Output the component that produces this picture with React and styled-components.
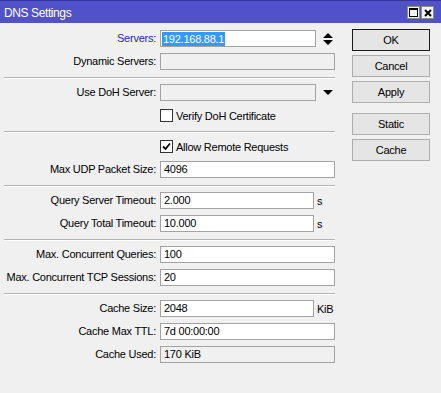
import React from 'react'
import styled, { createGlobalStyle } from 'styled-components'

const GlobalStyle = createGlobalStyle`
  html, body, #root {
    margin: 0;
    height: 100%;
  }
  body {
    background: #f0f0f0;
    font-family: "Liberation Sans", Arial, sans-serif;
    font-size: 11px;
    letter-spacing: -0.25px;
    color: #000;
  }
`

const Window = styled.div`
  width: 441px;
  height: 393px;
  display: flex;
  flex-direction: column;
  background: #f0f0f0;
  overflow: hidden;
`

const TitleBar = styled.div`
  height: 23px;
  box-sizing: border-box;
  background: #5151c9;
  border-top: 1px solid #3434a0;
  display: flex;
  align-items: center;
  padding: 1px 7px 0 4px;
  color: #fff;
`

const Title = styled.div`
  flex: 1;
  font-size: 12px;
  letter-spacing: -0.4px;
`

const TitleButton = styled.div`
  width: 13px;
  height: 13px;
  box-sizing: border-box;
  background: #f2f2f2;
  border: 1px solid #8c8c8c;
  display: flex;
  align-items: center;
  justify-content: center;
  margin-left: 1px;
`

const Body = styled.div`
  display: flex;
  padding-top: 6px;
`

const Form = styled.div`
  width: 335px;
  padding-top: 1px;
`

const Group = styled.div`
  display: flex;
  flex-direction: column;
  gap: 6px;
`

const Separator = styled.div`
  height: 0;
  border-top: 1px solid #b4b4b4;
  border-bottom: 1px solid #ffffff;
  margin: 7px 0 5px 4px;
`

const Row = styled.div`
  display: grid;
  grid-template-columns: 156px 175px;
  column-gap: 4px;
  height: 17px;
  align-items: center;
`

const Label = styled.div`
  text-align: right;
  white-space: nowrap;
  line-height: 17px;
  color: ${p => (p.$active ? '#1f1fd0' : '#000')};
`

const Field = styled.div`
  display: flex;
  align-items: center;
  height: 17px;
`

const Input = styled.div`
  box-sizing: border-box;
  height: 17px;
  width: ${p => p.$width || 175}px;
  border: 1px solid #a3a3a3;
  background: ${p => (p.$disabled ? '#f0f0f0' : '#fff')};
  padding: 0 3px;
  line-height: 15px;
  white-space: nowrap;
  overflow: hidden;
`

const Selected = styled.span`
  display: inline-block;
  background: #3399ff;
  color: #fff;
  line-height: 14px;
  padding: 0 1px;
  margin-left: -2px;
  vertical-align: top;
  margin-top: 1px;
`

const Unit = styled.span`
  margin-left: 3px;
`

const IconSlot = styled.div`
  margin-left: 7px;
  display: flex;
  align-items: center;
`

const CheckField = styled.div`
  display: flex;
  align-items: center;
  gap: 3px;
  white-space: nowrap;
`

const CheckBox = styled.div`
  width: 13px;
  height: 13px;
  box-sizing: border-box;
  border: 1px solid #333;
  background: #fff;
  display: flex;
  align-items: center;
  justify-content: center;
`

const Buttons = styled.div`
  margin-left: 17px;
  width: 78px;
  display: flex;
  flex-direction: column;
  gap: 4px;
`

const Button = styled.button`
  height: 22px;
  box-sizing: border-box;
  margin: 0;
  margin-top: ${p => (p.$spaced ? '6px' : '0')};
  padding: 0;
  border: 1px solid ${p => (p.$default ? '#1b1b1b' : '#adadad')};
  background: #e5e5e5;
  font: inherit;
  font-size: 11px;
  letter-spacing: -0.25px;
  color: #000;
`

const UpDown = () => (
  <svg width="10" height="12" viewBox="0 0 10 12">
    <path d="M5 0 L10 5 H0 Z M0 7 H10 L5 12 Z" fill="#000" />
  </svg>
)

const DropArrow = () => (
  <svg width="10" height="5" viewBox="0 0 10 5">
    <path d="M0 0 H10 L5 5 Z" fill="#000" />
  </svg>
)

const Check = () => (
  <svg width="9" height="9" viewBox="0 0 9 9">
    <path d="M1 4.5 L3.5 7 L8 1.5" stroke="#000" strokeWidth="1.8" fill="none" />
  </svg>
)

const TextRow = ({ label, value, width, disabled, unit, children }) => (
  <Row>
    <Label>{label}</Label>
    <Field>
      <Input $width={width} $disabled={disabled}>{value}</Input>
      {unit && <Unit>{unit}</Unit>}
      {children}
    </Field>
  </Row>
)

const CheckRow = ({ label, checked }) => (
  <Row>
    <span />
    <CheckField>
      <CheckBox>{checked && <Check />}</CheckBox>
      {label}
    </CheckField>
  </Row>
)

export default function App() {
  return (
    <Window>
      <GlobalStyle />
      <TitleBar>
        <Title>DNS Settings</Title>
        <TitleButton>
          <svg width="9" height="9" viewBox="0 0 9 9">
            <rect x="0.5" y="0.5" width="8" height="8" fill="none" stroke="#000" />
            <rect x="0" y="0" width="9" height="2" fill="#000" />
          </svg>
        </TitleButton>
        <TitleButton>
          <svg width="8" height="8" viewBox="0 0 8 8">
            <path d="M1 1 L7 7 M7 1 L1 7" stroke="#000" strokeWidth="2" />
          </svg>
        </TitleButton>
      </TitleBar>

      <Body>
        <Form>
          <Group>
            <Row>
              <Label $active>Servers:</Label>
              <Field>
                <Input $width={156}>
                  <Selected>192.168.88.1</Selected>
                </Input>
                <IconSlot><UpDown /></IconSlot>
              </Field>
            </Row>
            <TextRow label="Dynamic Servers:" value="" disabled />
          </Group>
          <Separator />
          <Group>
            <TextRow label="Use DoH Server:" value="" width={156} disabled>
              <IconSlot><DropArrow /></IconSlot>
            </TextRow>
            <CheckRow label="Verify DoH Certificate" />
          </Group>
          <Separator />
          <Group>
            <CheckRow label="Allow Remote Requests" checked />
            <TextRow label="Max UDP Packet Size:" value="4096" />
          </Group>
          <Separator />
          <Group>
            <TextRow label="Query Server Timeout:" value="2.000" width={154} unit="s" />
            <TextRow label="Query Total Timeout:" value="10.000" width={154} unit="s" />
          </Group>
          <Separator />
          <Group>
            <TextRow label="Max. Concurrent Queries:" value="100" />
            <TextRow label="Max. Concurrent TCP Sessions:" value="20" />
          </Group>
          <Separator />
          <Group>
            <TextRow label="Cache Size:" value="2048" width={154} unit="KiB" />
            <TextRow label="Cache Max TTL:" value="7d 00:00:00" />
            <TextRow label="Cache Used:" value="170 KiB" disabled />
          </Group>
        </Form>

        <Buttons>
          <Button $default>OK</Button>
          <Button>Cancel</Button>
          <Button>Apply</Button>
          <Button $spaced>Static</Button>
          <Button>Cache</Button>
        </Buttons>
      </Body>
    </Window>
  )
}
